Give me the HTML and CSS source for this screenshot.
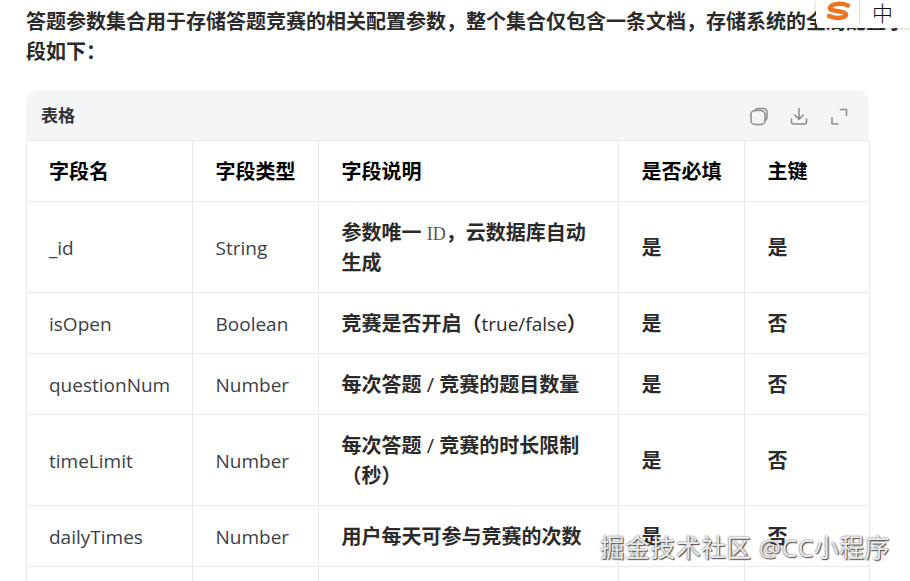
FILE: index.html
```html
<!DOCTYPE html>
<html lang="zh">
<head>
<meta charset="utf-8">
<title>答题参数集合</title>
<link rel="stylesheet" href="styles.css">
</head>
<body>
<main class="page">
  <p class="intro">答题参数集合用于存储答题竞赛的相关配置参数，整个集合仅包含一条文档，存储系统的全局配置字段如下：</p>
  <section class="card">
    <header class="card-head">
      <span class="card-title">表格</span>
      <div class="tools">
        <svg class="tool" viewBox="0 0 20 20"><path d="M6.500 3.800A3.200 3.200 0 0 1 9 2.500h5.500a3.500 3.500 0 0 1 3.500 3.500v5.500a3.200 3.200 0 0 1-1.500 2.700"/><rect x="2" y="4.500" width="14" height="14" rx="4"/></svg>
        <svg class="tool" viewBox="0 0 20 20"><path d="M10 2.500v10.500M5.800 9 10 13.200 14.200 9M2.500 13v3a2 2 0 0 0 2 2h11a2 2 0 0 0 2-2v-3"/></svg>
        <svg class="tool" viewBox="0 0 20 20"><path d="M11.500 3.500h6v6M3 12v6h6"/></svg>
      </div>
    </header>
    <table class="grid">
      <colgroup><col class="c1"><col class="c2"><col class="c3"><col class="c4"><col class="c5"></colgroup>
      <thead><tr><th>字段名</th><th>字段类型</th><th>字段说明</th><th>是否必填</th><th>主键</th></tr></thead>
      <tbody>
        <tr><td class="latin">_id</td><td class="latin">String</td><td class="strong">参数唯一 <span class="serif">ID</span>，云数据库自动生成</td><td class="strong">是</td><td class="strong">是</td></tr>
        <tr><td class="latin">isOpen</td><td class="latin">Boolean</td><td class="strong">竞赛是否开启（<span class="plain">true/false</span>）</td><td class="strong">是</td><td class="strong">否</td></tr>
        <tr><td class="latin">questionNum</td><td class="latin">Number</td><td class="strong">每次答题 <span class="slash">/</span> 竞赛的题目数量</td><td class="strong">是</td><td class="strong">否</td></tr>
        <tr><td class="latin">timeLimit</td><td class="latin">Number</td><td class="strong">每次答题 <span class="slash">/</span> 竞赛的时长限制（秒）</td><td class="strong">是</td><td class="strong">否</td></tr>
        <tr><td class="latin">dailyTimes</td><td class="latin">Number</td><td class="strong">用户每天可参与竞赛的次数</td><td class="strong">是</td><td class="strong">否</td></tr>
        <tr><td>&nbsp;</td><td></td><td></td><td></td><td></td></tr>
      </tbody>
    </table>
  </section>
</main>
<aside class="ime">
  <svg class="ime-logo" viewBox="0 0 26 22"><path d="M23 4.500C17 2 6 2 5 7c-.5 4 15 2.500 16 6 .5 4.500-11 5-17 2"/></svg>
  <span class="ime-sep"></span>
  <span class="ime-zh">中</span>
</aside>
<div class="watermark">掘金技术社区 @CC小程序</div>
</body>
</html>
```
FILE: styles.css
```css
* { box-sizing: border-box; }
html, body { margin: 0; height: 100%; overflow: hidden; background: #fff; }
body {
  position: relative;
  font-family: "Open Sans", "Noto Sans CJK SC", sans-serif;
  font-size: 20px;
  line-height: 30px;
  color: #333;
}
.page { padding: 7px 4px 0 26px; }
.intro { margin: 0 0 23px; font-weight: 700; color: #2b2b2b; }
.card { width: 843px; }
.card-head {
  display: flex;
  align-items: center;
  justify-content: space-between;
  height: 50px;
  padding: 1px 20px 0 15px;
  background: #f3f5f6;
  border-radius: 14px 14px 0 0;
}
.card-title { font-size: 17px; font-weight: 700; color: #333; }
.tools { display: flex; gap: 20px; }
.tool { width: 20px; height: 20px; fill: none; stroke: #8a8a8a; stroke-width: 1.500; stroke-linecap: round; stroke-linejoin: round; }
.grid { width: 843px; table-layout: fixed; border-collapse: collapse; }
.c1 { width: 166px; }
.c2 { width: 126px; }
.c3 { width: 300px; }
.c4 { width: 126px; }
.c5 { width: 125px; }
.grid th, .grid td {
  border: 1px solid #e9e9e9;
  padding: 16px 22px 14px 22.500px;
  text-align: left;
  vertical-align: middle;
}
.grid th:first-child, .grid td:first-child { padding-left: 22px; }
.grid th { font-weight: 700; color: #000; }
.grid td { color: #3b4048; }
.grid td.latin { font-size: 19px; }
.grid td.strong { font-weight: 700; color: #2b2b2b; }
.plain { font-weight: 400; font-size: 19px; line-height: 0; }
.slash { font-weight: 400; line-height: 0; }
.serif { font-family: "Liberation Serif", serif; font-weight: 400; font-size: 18px; line-height: 0; color: #555; }
.ime {
  position: absolute;
  top: 0;
  right: 0;
  width: 94px;
  height: 28px;
  display: flex;
  align-items: center;
  padding: 0 0 4px 9px;
  background: #fff;
  border-radius: 0 0 0 6px;
  box-shadow: 0 1px 4px rgba(0,0,0,.2);
}
.ime-logo { width: 26px; height: 22px; fill: none; stroke: #ee7420; stroke-width: 4.500; stroke-linecap: round; }
.ime-sep { width: 1px; height: 22px; margin: 0 12px 0 8px; background: #ddd; }
.ime-zh { font-size: 21px; line-height: 22px; font-weight: 300; color: #111; font-family: "Noto Sans CJK SC", sans-serif; }
.watermark {
  position: absolute;
  left: 600px;
  top: 533px;
  font-size: 24.500px;
  letter-spacing: .8px;
  line-height: 30px;
  color: rgba(255,255,255,.9);
  text-shadow: 0 0 2px #444, 1px 1px 1px #555;
  white-space: nowrap;
}
```
